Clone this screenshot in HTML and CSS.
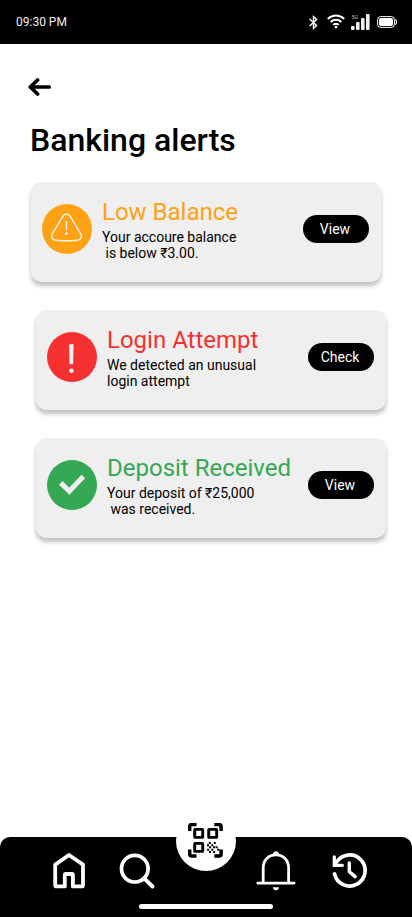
FILE: index.html
```html
<!DOCTYPE html>
<html lang="en">
<head>
<meta charset="utf-8">
<meta name="viewport" content="width=device-width, initial-scale=1">
<title>Banking alerts</title>
<link rel="stylesheet" href="styles.css">
</head>
<body>
<div class="screen">
  <header class="status">
    <span class="time">09:30 PM</span>
    <div class="status-icons">
      <svg class="bluetooth" width="9" height="15" viewBox="0 0 9 15" fill="none" stroke="#fff" stroke-width="1.4"><path d="M.6 4.1 7.6 10.6 4.5 13.4V1.6L7.6 4.4.6 10.900"/></svg>
      <svg class="wifi" width="18" height="15" viewBox="0 0 18 15" fill="none" stroke="#fff" stroke-width="2"><path d="M.8 4.900c4.700-4.400 11.700-4.400 16.400 0M3.600 8c3.100-2.900 7.700-2.900 10.800 0M6.300 10.900c1.600-1.400 3.800-1.400 5.400 0"/><circle cx="9" cy="13.100" r="1.300" fill="#fff" stroke="none"/></svg>
      <svg class="signal" width="19" height="17" viewBox="0 0 19 17" fill="#f0f0f0"><rect x="0" y="13" width="3.600" height="4" rx="1"/><rect x="5" y="9" width="3.600" height="8" rx="1"/><rect x="10" y="5" width="3.600" height="12" rx="1"/><rect x="15" y="1" width="3.600" height="16" rx="1"/><text class="network" x="0.500" y="6">5G</text></svg>
      <svg class="battery" width="20" height="12" viewBox="0 0 20 12"><rect x=".6" y=".6" width="16.800" height="10.800" rx="3.200" fill="none" stroke="#fff" stroke-width="1"/><rect x="2" y="2" width="14" height="8" rx="2" fill="#fff"/><path d="M18.200 3.600c1.800 1 1.800 3.800 0 4.800" fill="none" stroke="#fff" stroke-width="1.100"/></svg>
    </div>
  </header>

  <main class="content">
    <a class="back" href="#" aria-label="Back">
      <svg width="24" height="18" viewBox="0 0 24 18" fill="none" stroke="#000" stroke-width="3.700" stroke-linecap="round" stroke-linejoin="round"><path d="M21.200 9H2.300M9.600 2 2.300 9l7.300 7"/></svg>
    </a>
    <h1>Banking alerts</h1>

    <section class="alerts">
      <article class="card card-first warning">
        <svg class="badge" width="50" height="50" viewBox="0 0 50 50"><circle cx="25" cy="25" r="25" fill="currentColor"/><path d="M21 12.100c1.700-2.900 5.300-2.900 7 0l10.600 17.400c2 3.800.2 6.500-3.500 6.800-7 .7-14.200.7-21.200 0-3.700-.3-5.500-3-3.500-6.800z" fill="none" stroke="#fff3df" stroke-width="1.500"/><path d="M24.500 17.500v8.300" stroke="#fff3df" stroke-width="1.500" stroke-linecap="round"/><circle cx="24.500" cy="29.500" r="1.600" fill="#fff3df"/></svg>
        <div class="message"><h2>Low Balance</h2><p>Your accoure balance<br>&nbsp;is below ₹3.00.</p></div>
        <button>View</button>
      </article>
      <article class="card danger">
        <svg class="badge" width="50" height="50" viewBox="0 0 50 50"><circle cx="25" cy="25" r="25" fill="currentColor"/><path d="M22 12.200h4.600l-.5 20h-3.600z" fill="#efefef"/><circle cx="24.400" cy="38.700" r="2.300" fill="#efefef"/></svg>
        <div class="message"><h2>Login Attempt</h2><p>We detected an unusual<br>login attempt</p></div>
        <button>Check</button>
      </article>
      <article class="card success">
        <svg class="badge" width="50" height="50" viewBox="0 0 50 50"><circle cx="25" cy="25" r="25" fill="currentColor"/><path d="m13.800 22.900 8.500 8.300L36.300 16.600" fill="none" stroke="#efefef" stroke-width="5"/></svg>
        <div class="message"><h2>Deposit Received</h2><p>Your deposit of ₹25,000<br>&nbsp;was received.</p></div>
        <button>View</button>
      </article>
    </section>
  </main>

  <nav class="tabs">
    <a class="tab-home" href="#" aria-label="Home"><svg width="34" height="38" viewBox="0 0 34 38" fill="none" stroke="#fff" stroke-width="3.800" stroke-linejoin="round"><path d="M3.200 13.600 17 4 31 13.600V34.200a1.200 1.200 0 0 1-1.200 1.200H20.900V24a1 1 0 0 0-1-1H13.800a1 1 0 0 0-1 1V35.400H4.400a1.200 1.200 0 0 1-1.200-1.200z"/></svg></a>
    <a class="tab-search" href="#" aria-label="Search"><svg width="38" height="38" viewBox="0 0 38 38" fill="none" stroke="#fff" stroke-width="3.700"><circle cx="15.800" cy="16.700" r="13.300"/><path d="m25 26.100 8.500 8.400" stroke-width="4" stroke-linecap="round"/></svg></a>
    <a class="tab-scan" href="#" aria-label="Scan code"><svg width="36" height="36" viewBox="0 0 36 36" fill="none" stroke="#000" stroke-width="3.500"><path d="M1.700 8V3.500a2 2 0 0 1 2-2H8.500M26.300 1.500h4.800a2 2 0 0 1 2 2V8M33.100 26.500V31a2 2 0 0 1-2 2H26.300M8.500 33H3.700a2 2 0 0 1-2-2v-4.500"/><rect x="6.700" y="6.400" width="8" height="8" rx=".5" stroke-width="2.900"/><rect x="20.700" y="6.400" width="8" height="8" rx=".5" stroke-width="2.900"/><rect x="6.700" y="20.400" width="8" height="8" rx=".5" stroke-width="2.900"/><path d="M20.800 19h2v2h-2zm5 0h2v2h-2zm-6.800 2.200h2v2h-2zm4.300 0h2v2h-2zm4.300 2.100h2v2h-2zm-6.500 0h2v2h-2zm4 0h2v2h-2zm-6 2.500h2v2h-2zm4.200 0h2v2h-2zm6 0h2v2h-2zm-8.300 2.200h2v2h-2zm4.200 0h2v2h-2z" fill="#000" stroke="none"/></svg></a>
    <a class="tab-bell" href="#" aria-label="Notifications"><svg width="40" height="42" viewBox="0 0 40 42" fill="none" stroke="#fff" stroke-width="2.800"><path d="M7.200 32V17C7.200 9 12.500 3.900 19.900 3.900S32.600 9 32.600 17v15"/><path d="M1.800 32.100h36.300" stroke-linecap="round"/><path d="M16.600 4.400c.2-5.500 6.400-5.500 6.600 0z" fill="#fff" stroke="none"/><path d="M16.800 36.200h6.200c-.8 4.200-5.400 4.200-6.200 0z" fill="#fff" stroke="none"/></svg></a>
    <a class="tab-history" href="#" aria-label="History"><svg width="36" height="36" viewBox="0 0 36 36" fill="none" stroke="#fff" stroke-width="3.700" stroke-linecap="round"><path d="M4.300 9.500A15.500 15.500 0 1 1 2.500 21"/><path d="M2.300 3.900v8.400h8" stroke-width="3.300"/><path d="M17.300 10v8.600l5.800 5" stroke-width="3.400" stroke-linejoin="round"/></svg></a>
    <span class="home-bar"></span>
  </nav>
</div>
</body>
</html>
```
FILE: styles.css
```css
* { box-sizing: border-box; }
body { margin: 0; background: #fff; font-family: Roboto, "Noto Sans", sans-serif; color: #000; }
svg { display: block; flex: none; }
h1, h2, p { margin: 0; }
.screen { width: 412px; height: 917px; display: flex; flex-direction: column; overflow: hidden; }

.status { height: 44px; flex: none; background: #000; color: #fff; display: flex; justify-content: space-between; align-items: center; padding: 0 15px 0 16px; }
.time { font-size: 12px; line-height: 14px; color: #eee; }
.status-icons { display: flex; align-items: center; }
.wifi { margin-left: 9px; margin-top: -1px; }
.signal { margin-left: 6px; margin-top: -1px; }
.battery { margin-left: 7px; }
.network { font-size: 5.5px; fill: #bbb; }

.content { flex: 1; padding: 34px 25px 0 30px; }
.back { display: block; width: 24px; margin-left: -2px; }
h1 { font-size: 32px; line-height: 38px; font-weight: 500; margin-top: 25px; white-space: nowrap; }
.alerts { display: flex; flex-direction: column; gap: 28px; margin-top: 23px; padding-left: 6px; }
.card { width: 350px; height: 100px; border-radius: 10px; background: #efefef; box-shadow: 0 4px 4px rgba(0, 0, 0, .25); display: flex; align-items: flex-start; padding: 0 12px 0 11px; }
.card-first { margin-left: -5px; }
.badge { margin-top: 22px; }
.message { margin: 16px 0 0 10px; flex: 1; white-space: nowrap; }
h2 { font-size: 24px; line-height: 28px; font-weight: 400; color: inherit; }
.message p { color: #000; font-size: 14px; line-height: 16px; margin-top: 3px; }
.warning { color: #ffa114; }
.danger { color: #f53030; }
.success { color: #34a853; }
button { width: 66px; height: 28px; margin-top: 33px; padding: 0 2px 0 0; border: 0; border-radius: 14px; background: #000; color: #fff; font: 400 14px/28px Roboto, sans-serif; }

.tabs { height: 80px; flex: none; position: relative; background: #000; border-radius: 10px 10px 0 0; display: flex; align-items: flex-start; }
.tab-home { margin: 14px 0 0 52px; }
.tab-search { margin: 15px 0 0 33px; }
.tab-scan { width: 60px; height: 60px; margin: -26px 0 0 19px; padding: 12px; border-radius: 50%; background: #fff; }
.tab-bell { margin: 14px 0 0 19.500px; }
.tab-history { margin: 16px 0 0 36.500px; }
.home-bar { position: absolute; left: 139px; bottom: 8.500px; width: 134px; height: 4.500px; border-radius: 3px; background: #fff; }
```
